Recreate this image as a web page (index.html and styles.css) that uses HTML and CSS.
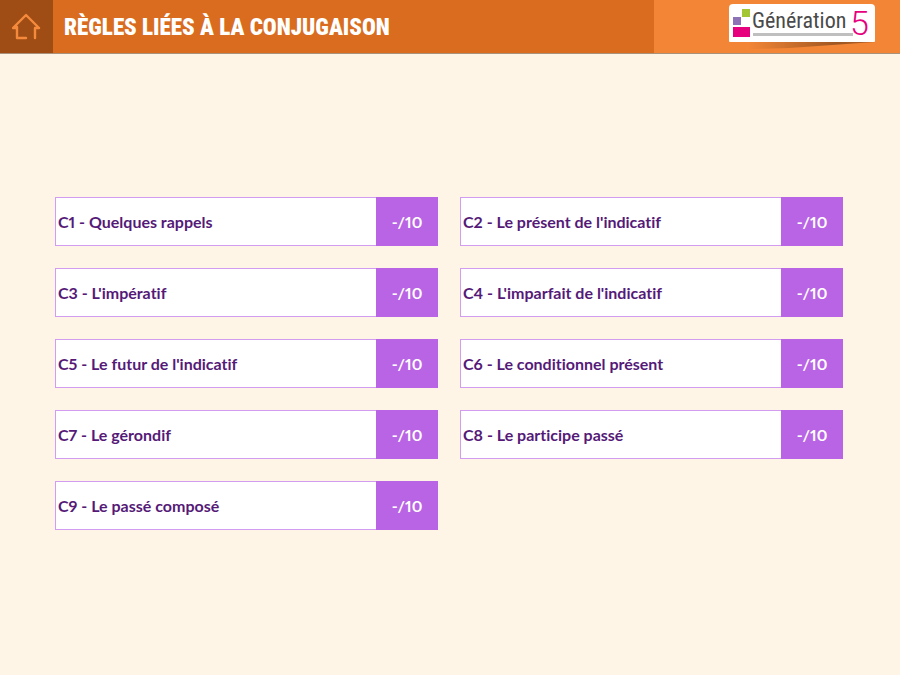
FILE: index.html
```html
<!DOCTYPE html>
<html lang="fr">
<head>
  <meta charset="utf-8">
  <meta name="viewport" content="width=device-width, initial-scale=1">
  <title>Règles liées à la conjugaison</title>
  <link rel="stylesheet" href="styles.css">
</head>
<body>
  <header class="header">
    <a href="#" class="home" aria-label="Accueil">
      <svg width="30" height="28" viewBox="0 0 30 28" fill="none" stroke="#f58a3c" stroke-width="2.4" stroke-linecap="round" stroke-linejoin="round">
        <path d="M14 25 H5 V14 M1 15 L14 2 L27 15 M1 15 H5 M27 15 H23 V25"/>
      </svg>
    </a>
    <h1 class="title">Règles liées à la conjugaison</h1>
    <div class="brand">
      <a href="#" class="logo">
        <svg class="logo-squares" width="17" height="28" viewBox="0 0 17 28">
          <rect x="9" y="0" width="8" height="8" fill="#a2c634"/>
          <rect x="0" y="8" width="8" height="8" fill="#8d72b5"/>
          <rect x="0" y="18" width="17" height="10" fill="#e6007e"/>
        </svg>
        <span class="logo-name">Génération</span>
        <span class="logo-five">5</span>
      </a>
      <svg class="logo-shadow" width="146" height="8" viewBox="0 0 146 8">
        <defs>
          <linearGradient id="shade">
            <stop offset="0" stop-color="#8a4a1c" stop-opacity="0"/>
            <stop offset="0.7" stop-color="#8a4a1c" stop-opacity="0.8"/>
            <stop offset="1" stop-color="#8a4a1c" stop-opacity="0.6"/>
          </linearGradient>
        </defs>
        <path d="M20 0 H146 L60 6 L20 7 Z" fill="url(#shade)"/>
      </svg>
    </div>
  </header>

  <main class="content">
    <div class="rules">
      <a href="#" class="rule"><span class="rule-name">C1 - Quelques rappels</span><span class="score">-/10</span></a>
      <a href="#" class="rule"><span class="rule-name">C2 - Le présent de l'indicatif</span><span class="score">-/10</span></a>
      <a href="#" class="rule"><span class="rule-name">C3 - L'impératif</span><span class="score">-/10</span></a>
      <a href="#" class="rule"><span class="rule-name">C4 - L'imparfait de l'indicatif</span><span class="score">-/10</span></a>
      <a href="#" class="rule"><span class="rule-name">C5 - Le futur de l'indicatif</span><span class="score">-/10</span></a>
      <a href="#" class="rule"><span class="rule-name">C6 - Le conditionnel présent</span><span class="score">-/10</span></a>
      <a href="#" class="rule"><span class="rule-name">C7 - Le gérondif</span><span class="score">-/10</span></a>
      <a href="#" class="rule"><span class="rule-name">C8 - Le participe passé</span><span class="score">-/10</span></a>
      <a href="#" class="rule"><span class="rule-name">C9 - Le passé composé</span><span class="score">-/10</span></a>
    </div>
  </main>
</body>
</html>
```
FILE: styles.css
```css
* {
  box-sizing: border-box;
}

body {
  margin: 0;
  min-height: 100vh;
  display: flex;
  flex-direction: column;
  font-family: Lato, sans-serif;
  background: #fef5e6;
}

a {
  text-decoration: none;
}

.header {
  display: flex;
  height: 54px;
  background: #d96c1e;
  border-bottom: 1px solid #a8927c;
}

.home {
  display: flex;
  align-items: center;
  justify-content: center;
  width: 53px;
  background: #9f4d15;
}

.title {
  flex: 1;
  margin: 0;
  padding-left: 11px;
  font-family: "Roboto Condensed", Roboto, sans-serif;
  font-size: 23px;
  font-weight: 900;
  line-height: 56px;
  text-transform: uppercase;
  white-space: nowrap;
  color: #fff;
}

.brand {
  position: relative;
  width: 246px;
  padding: 4px 25px 0 0;
  background: #f28536;
}

.logo {
  position: relative;
  display: flex;
  align-items: center;
  width: 146px;
  height: 38px;
  margin-left: auto;
  padding-left: 4px;
  background: #fff;
  border-radius: 4px 4px 1px 1px;
}

.logo-squares {
  flex: none;
}

/* grey underline below the name */
.logo::after {
  content: "";
  position: absolute;
  left: 24px;
  right: 22px;
  bottom: 6px;
  height: 3px;
  background: #bfbfbf;
}

.logo-name {
  width: 96px;
  margin: 0 2px 4px;
  font-family: "Roboto Condensed", Roboto, sans-serif;
  font-size: 22px;
  line-height: 28px;
  color: #4a4a4a;
}

.logo-five {
  font-family: Roboto, sans-serif;
  font-size: 34px;
  font-weight: 300;
  line-height: 38px;
  color: #e6007e;
}

.logo-shadow {
  position: absolute;
  right: 25px;
  top: 42px;
}

.content {
  flex: 1;
  display: flex;
  flex-direction: column;
  justify-content: center;
  padding: 0 57px 2px 55px;
}

.rules {
  display: grid;
  grid-template-columns: 1fr 1fr;
  gap: 22px;
}

.rule {
  display: flex;
  height: 49px;
  font-size: 16px;
  font-weight: 700;
  font-variant-ligatures: none;
  font-variant-numeric: proportional-nums;
  line-height: 47px;
  background: #fff;
  border: 1px solid #d29cf0;
}

.rule-name {
  flex: 1;
  padding-left: 2px;
  color: #551a78;
}

.score {
  width: 62px;
  margin: -1px;
  text-align: center;
  line-height: 49px;
  color: #fff;
  background: #b964e4;
}
```
